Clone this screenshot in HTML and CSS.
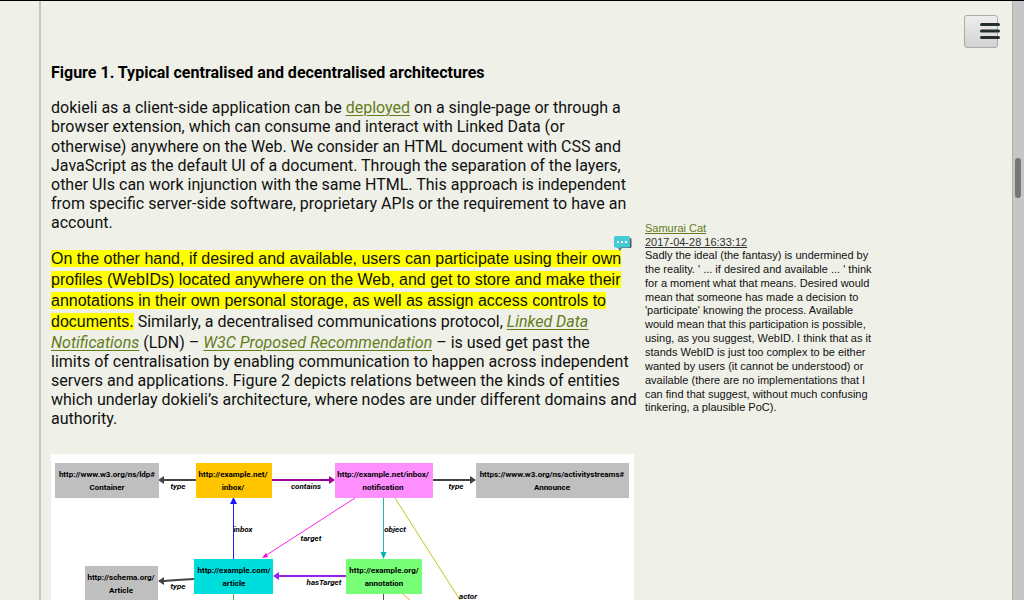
FILE: index.html
```html
<!DOCTYPE html>
<html lang="en">
<head>
<meta charset="utf-8">
<title>dokieli</title>
<link rel="stylesheet" href="styles.css">
</head>
<body>
<div class="window">
  <div class="page">
    <main class="article">
      <h2 class="caption">Figure 1. Typical centralised and decentralised architectures</h2>
      <p class="para">dokieli as a client-side application can be <a href="#deployed">deployed</a> on a single-page or through a browser extension, which can consume and interact with Linked Data (or otherwise) anywhere on the Web. We consider an HTML document with CSS and JavaScript as the default UI of a document. Through the separation of the layers, other UIs can work injunction with the same HTML. This approach is independent from specific server-side software, proprietary APIs or the requirement to have an account.</p>
      <div class="annotated">
        <p class="para"><mark class="highlight">On the other hand, if desired and available, users can participate using their own profiles (WebIDs) located anywhere on the Web, and get to store and make their annotations in their own personal storage, as well as assign access controls to documents.</mark> Similarly, a decentralised communications protocol, <a href="#ldn"><em>Linked Data Notifications</em></a> (LDN) – <a href="#w3c"><em>W3C Proposed Recommendation</em></a> – is used get past the<br>limits of centralisation by enabling communication to happen across independent servers and applications. Figure 2 depicts relations between the kinds of entities which underlay dokieli’s architecture, where nodes are under different domains and authority.</p>
        <a class="note-mark" href="#note" aria-label="View note">
          <svg width="18" height="15" viewBox="0 0 18 15">
            <path d="M3 2h13q1.500 0 1.500 1.500v7q0 1.500-1.500 1.500H8l-3 3v-3H3z" fill="#50585a"/>
            <path d="M1.500 0h13q1.500 0 1.500 1.500v8.500q0 1.500-1.500 1.500H6.500L4.500 13.500 3.500 11.500h-2Q0 11.500 0 10V1.500Q0 0 1.500 0z" fill="#45cbd5"/>
            <path d="M3 5h2v2H3zM7 5h2v2H7zM11 5h2v2h-2z" fill="#fff"/>
          </svg>
        </a>
      </div>
      <figure class="figure">
        <svg class="diagram" viewBox="0 0 583 190" role="img" aria-label="Relations between entities">
          <g class="edges">
            <path d="M113 26H145" stroke="#444"/><path d="M107 26l6-4v8z" fill="#444"/>
            <path d="M221 26H279" stroke="#990099"/><path d="M284 26l-6-4v8z" fill="#990099"/>
            <path d="M382 26H420" stroke="#444"/><path d="M425 26l-6-4v8z" fill="#444"/>
            <path class="thin" d="M182.500 105V48" stroke="#2020e8"/><path d="M182.500 43l-3.500 7h7z" fill="#1818ff"/>
            <path class="thin" d="M304 44L214 102" stroke="#ff22ee"/><path d="M211 104l4-5 2 4z" fill="#ff00ee"/>
            <path class="thin" d="M332.500 44V99" stroke="#22b5ac"/><path d="M332.500 105l-3-7h6z" fill="#00b8ae"/>
            <path class="thin" d="M344 44L416 157" stroke="#c4c420"/>
            <path d="M113 127L126 126 143 125" stroke="#444"/><path d="M107 127l6-4v8z" fill="#444"/>
            <path d="M228 122H295" stroke="#9922ee"/><path d="M222 122l6-4v8z" fill="#9922ee"/>
            <path class="thin" d="M182.500 139V165" stroke="#30c030"/>
            <path class="thin" d="M332.500 139V165" stroke="#555"/>
            <path class="thin" d="M351 139L374 160" stroke="#ff9922"/>
          </g>
          <g class="nodes">
            <rect x="4" y="9" width="104" height="35" fill="#bfbfbf"/>
            <rect x="145" y="9" width="76" height="35" fill="#ffc600"/>
            <rect x="284" y="9" width="98" height="35" fill="#ff8eff"/>
            <rect x="425" y="9" width="153" height="35" fill="#bfbfbf"/>
            <rect x="34" y="112" width="73" height="35" fill="#bfbfbf"/>
            <rect x="143" y="105" width="79" height="35" fill="#00dddd"/>
            <rect x="295" y="105" width="76" height="35" fill="#77ff77"/>
          </g>
          <g class="names">
            <text x="56" y="23">http://www.w3.org/ns/ldp#</text><text x="56" y="36">Container</text>
            <text x="182" y="23">http://example.net/</text><text x="182" y="36">inbox/</text>
            <text x="332" y="23">http://example.net/inbox/</text><text x="332" y="36">notification</text>
            <text x="501" y="23">https://www.w3.org/ns/activitystreams#</text><text x="501" y="36">Announce</text>
            <text x="70" y="126">http://schema.org/</text><text x="70" y="139">Article</text>
            <text x="183" y="119">http://example.com/</text><text x="183" y="132">article</text>
            <text x="333" y="119">http://example.org/</text><text x="333" y="132">annotation</text>
          </g>
          <g class="labels">
            <text x="127" y="35">type</text><text x="255" y="35">contains</text><text x="405" y="35">type</text>
            <text x="192" y="78">inbox</text><text x="260" y="87">target</text><text x="344" y="78">object</text>
            <text x="127" y="135">type</text><text x="273" y="131">hasTarget</text><text x="417" y="145">actor</text>
          </g>
        </svg>
      </figure>
    </main>
    <aside class="note" id="note">
      <a href="#cat">Samurai Cat</a><br>
      <a class="date" href="#date">2017-04-28 16:33:12</a>
      <p class="note-text">Sadly the ideal (the fantasy) is undermined by the reality. ' ... if desired and available ... ' think for a moment what that means. Desired would mean that someone has made a decision to 'participate' knowing the process. Available would mean that this participation is possible, using, as you suggest, WebID. I think that as it stands WebID is just too complex to be either wanted by users (it cannot be understood) or available (there are no implementations that I can find that suggest, without much confusing tinkering, a plausible PoC).</p>
    </aside>
    <button class="menu" type="button" aria-label="Menu">
      <svg width="20" height="18" viewBox="0 0 20 18"><path d="M1.500 2.500h17M1.500 9h17M1.500 15.500h17" stroke="#242d2d" stroke-width="3" stroke-linecap="round"/></svg>
    </button>
  </div>
  <div class="scroll"><div class="thumb"></div></div>
</div>
</body>
</html>
```
FILE: styles.css
```css
* { box-sizing: border-box; }
body {
  margin: 0;
  overflow: hidden;
  background: #eff0e8;
  color: #111;
  font: 16px/1.2 Roboto, "Liberation Sans", sans-serif;
}
.window {
  display: flex;
  height: 100vh;
  border-top: 1px solid #000;
  overflow: hidden;
}
.page {
  display: flex;
  flex: 1;
  align-items: flex-start;
  margin-left: 39px;
  padding-left: 10px;
  border-left: 2px solid #c6c7c1;
}
.article { flex: 0 1 590px; padding-top: 62px; }
.caption { margin: 0 0 16px; font-size: 16px; color: #000; }
.para { margin: 0 0 15px; }
a { color: #647d1b; text-underline-offset: 2px; text-decoration-thickness: 1px; }
.annotated { position: relative; }
.annotated .para { margin-bottom: 25px; }
.highlight {
  background: #ff0;
  color: #111;
  font-family: "Liberation Sans", Arial, sans-serif;
  line-height: 1.33;
}
.note-mark { position: absolute; top: -12px; right: 9px; line-height: 0; }
.figure { margin: 0 7px 0 0; background: #fff; }
.diagram { display: block; width: 100%; }
.edges { fill: none; stroke-width: 2; }
.edges .thin { stroke-width: 1; }
.names, .labels {
  font: bold 8px Roboto, "Liberation Sans", sans-serif;
  text-anchor: middle;
  fill: #000;
}
.labels { font-style: italic; }
.note {
  flex: 0 1 232px;
  margin: 220px 0 0 4px;
  font: 11px/14px "Liberation Sans", Arial, sans-serif;
}
.note a { text-underline-offset: 1px; }
.note .date { color: #333; }
.note-text { margin: 0; line-height: 1.26; }
.menu {
  width: 34px;
  height: 33px;
  margin: 14px 14px 0 auto;
  padding: 0 0 2px 15px;
  border: 1px solid #aaa;
  border-radius: 3px;
  background: linear-gradient(#eee, #d2d2d2);
}
.menu svg { display: block; }
.scroll {
  width: 12px;
  padding: 157px 3px 0 2px;
  border-left: 1px solid #b0b1af;
  background: #c5c6c5;
}
.thumb { height: 40px; border-radius: 3px; background: #737877; }
```
